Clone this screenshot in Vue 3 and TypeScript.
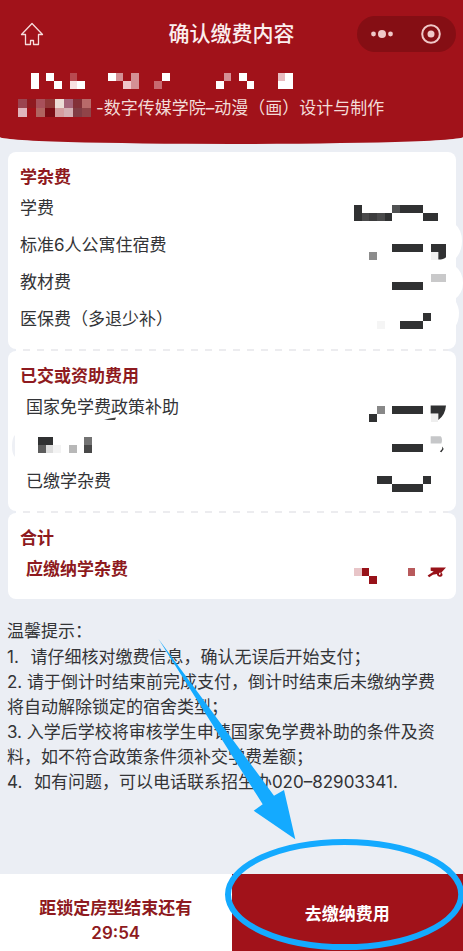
<script setup lang="ts">
import { h } from 'vue'
import type { FunctionalComponent } from 'vue'

// A masked block: column, row, width in cells, colour
type Cell = [number, number, number, string]

interface MosaicProps {
  cells: Cell[]
  cols: number
  shift?: number
}

interface FeeRow {
  label: string
  labelMask?: Cell[]
  amount: Cell[]
  // Vertical distance of the mask grid from the row's own grid
  shift?: number
  marks?: { d: string; fill: string }[]
}

interface FeeSection {
  title: string
  indented: boolean
  strong: boolean
  rows: FeeRow[]
}

const Mosaic: FunctionalComponent<MosaicProps> = (props) =>
  h(
    'svg',
    {
      viewBox: `0 0 ${props.cols * 10} 20`,
      preserveAspectRatio: 'none',
      'shape-rendering': 'crispEdges',
      'aria-hidden': 'true',
    },
    props.cells.map(([x, y, w, fill]) =>
      h('rect', { x: x * 10, y: y * 10 + (props.shift ?? 0), width: w * 10, height: 10, fill }),
    ),
  )
Mosaic.props = ['cells', 'cols', 'shift']

const ink = '#303132'
const red = '#981219'

const nameMask: Cell[] = [
  [0, 0, 1, '#fff'], [0, 1, 1, '#fff'], [2, 0, 1, '#fff'], [3, 1, 1, '#fff'],
  [5, 0, 1, '#b84a50'], [5, 1, 1, '#f8e0e0'], [6, 1, 1, '#fff'],
  [10, 0, 1, '#fff'], [11, 0, 1, '#d48f94'], [12, 1, 1, '#f0c6ca'],
  [13, 0, 1, '#d48f94'], [13, 1, 1, '#d48f94'], [16, 1, 1, '#c86a70'], [17, 0, 1, '#fff'],
  [24, 1, 1, '#fff'], [25, 0, 1, '#d48f94'], [27, 0, 1, '#fff'], [28, 1, 1, '#fff'],
  [32, 0, 1, '#e8bcc0'], [33, 0, 1, '#fff'], [32, 1, 2, '#fff'],
]

const classMask: Cell[] = [
  [0, 0, 1, '#9b4450'], [1, 0, 1, '#8f1a20'], [2, 0, 1, '#a8505a'], [3, 0, 1, '#903838'],
  [4, 0, 1, '#ecdcd6'], [5, 0, 1, '#a5647a'], [6, 0, 1, '#833038'], [7, 0, 1, '#b86a6a'],
  [0, 1, 1, '#e0b4bc'], [2, 1, 1, '#b06460'], [3, 1, 1, '#7a0c14'],
  [4, 1, 1, '#d49ea0'], [5, 1, 1, '#d4b0b4'], [6, 1, 1, '#803c44'], [7, 1, 1, '#904448'],
]

const sections: FeeSection[] = [
  {
    title: '学杂费',
    indented: false,
    strong: false,
    rows: [
      {
        label: '学费',
        amount: [
          [0, 0, 1, ink], [0, 1, 1, ink], [1, 1, 1, '#4a4a4b'], [2, 1, 1, '#3c3c3d'],
          [3, 1, 1, '#4a4a4b'], [4, 1, 1, ink], [5, 0, 1, '#505152'], [6, 0, 3, ink], [9, 1, 2, ink],
        ],
      },
      {
        label: '标准6人公寓住宿费',
        shift: 2,
        amount: [[5, 0, 4, ink], [2, 1, 1, '#8c8c8c'], [10, 0, 2, ink], [10, 1, 1, '#f0f0f0']],
        marks: [{ d: 'M110 10H120V17Q117 20 110 20Z', fill: ink }],
      },
      { label: '教材费', shift: -6, amount: [[10, 0, 2, '#c9c9ca'], [5, 1, 4, ink]] },
      { label: '医保费（多退少补）', shift: -4, amount: [[9, 0, 1, ink], [6, 1, 3, ink], [3, 1, 1, '#f5f5f5']] },
    ],
  },
  {
    title: '已交或资助费用',
    indented: true,
    strong: false,
    rows: [
      {
        label: '国家免学费政策补助',
        shift: 2,
        amount: [[3, 0, 1, '#888'], [2, 1, 1, ink], [5, 0, 4, ink], [10, 1, 1, '#eee']],
        marks: [{ d: 'M100 0H120Q119 12 110 18V10H100Z', fill: ink }],
      },
      {
        label: '',
        labelMask: [
          [0, 0, 2, ink], [0, 1, 1, '#5c5c5c'], [1, 1, 1, '#ddd'], [2, 1, 1, '#f3f3f3'],
          [4, 1, 1, '#b8b8b8'], [6, 0, 1, '#737373'], [6, 1, 1, '#484848'],
        ],
        shift: -6,
        amount: [[5, 1, 4, ink]],
        marks: [
          { d: 'M100 0H113Q116 3 114 9H100Z', fill: '#c6c7c9' },
          { d: 'M115 13L117 16L114 20L112 19L115 16Z', fill: ink },
        ],
      },
      { label: '已缴学杂费', shift: -3, amount: [[3, 0, 2, ink], [9, 0, 1, ink], [5, 1, 4, ink]] },
    ],
  },
  {
    title: '合计',
    indented: true,
    strong: true,
    rows: [
      {
        label: '应缴纳学杂费',
        shift: 2,
        amount: [[0, 0, 1, '#e8c5c8'], [1, 0, 1, red], [2, 1, 1, red], [7, 0, 1, '#b85a5c']],
        marks: [
          { d: 'M100 0H120L114 6Q117 9 114 11Q109 13 108 8Q103 8 98 12L96 10Q101 7 104 5L100 4Z', fill: red },
          { d: 'M111 7Q113 5 113 8Q112 10 111 9Z', fill: '#fff' },
        ],
      },
    ],
  },
]

const notes: string[] = [
  '1.\u2002\u2009请仔细核对缴费信息，确认无误后开始支付；',
  '2. 请于倒计时结束前完成支付，倒计时结束后未缴纳学费将自动解除锁定的宿舍类型；',
  '3. 入学后学校将审核学生申请国家免学费补助的条件及资料，如不符合政策条件须补交学费差额；',
  '4.\u2002\u2009如有问题，可以电话联系招生办020–82903341.',
]
</script>

<template>
  <div class="page">
    <header class="hero">
      <nav class="nav">
        <a class="home" href="#" aria-label="首页">
          <svg viewBox="0 0 24 24" aria-hidden="true">
            <path d="M12 1.5L1.5 12.5H5.500V22.5H10.500V18.5H13.500V22.5H18.5V12.5H22.5Z" />
          </svg>
        </a>
        <h1 class="title">确认缴费内容</h1>
        <div class="capsule">
          <button type="button" aria-label="更多">
            <svg viewBox="0 0 22 10" width="22" height="10" aria-hidden="true">
              <circle cx="2.5" cy="5" r="2.4" /><circle cx="11" cy="5" r="4" /><circle cx="19.5" cy="5" r="2.4" />
            </svg>
          </button>
          <button type="button" aria-label="关闭">
            <svg viewBox="0 0 20 20" width="20" height="20" aria-hidden="true">
              <circle class="ring" cx="10" cy="10" r="8.8" /><circle cx="10" cy="10" r="3.5" />
            </svg>
          </button>
        </div>
      </nav>
      <Mosaic class="name-mask" :cells="nameMask" :cols="34" />
      <p class="major">
        <Mosaic class="class-mask" :cells="classMask" :cols="8" />
        <span>-数字传媒学院–动漫（画）设计与制作</span>
      </p>
    </header>

    <main class="content">
      <div class="bill">
        <section
          v-for="section in sections"
          :key="section.title"
          class="block"
          :class="{ indented: section.indented, strong: section.strong }"
        >
          <h2>{{ section.title }}</h2>
          <dl>
            <div v-for="(row, i) in section.rows" :key="i" class="row">
              <dt>
                <Mosaic v-if="row.labelMask" class="label-mask" :cells="row.labelMask" :cols="7" />
                <template v-else>{{ row.label }}</template>
              </dt>
              <dd>
                <Mosaic class="amount-mask" :cells="row.amount" :cols="12" :shift="row.shift" />
                <svg v-if="row.marks" class="amount-mask marks" viewBox="0 0 120 20" preserveAspectRatio="none" aria-hidden="true">
                  <g :transform="`translate(0 ${row.shift ?? 0})`">
                    <path v-for="mark in row.marks" :key="mark.d" :d="mark.d" :fill="mark.fill" />
                  </g>
                </svg>
              </dd>
            </div>
          </dl>
        </section>
      </div>

      <section class="notes">
        <h2>温馨提示：</h2>
        <p v-for="note in notes" :key="note">{{ note }}</p>
      </section>
    </main>

    <footer class="actions">
      <div class="countdown">
        <span>距锁定房型结束还有</span>
        <time>29:54</time>
      </div>
      <button type="button" class="pay">去缴纳费用</button>
    </footer>

    <svg class="annotation" viewBox="0 0 463 951" aria-hidden="true">
      <path class="bump" d="M455 224Q462 230 462 241Q462 252 455 259ZM455 266Q463 272 463 283Q463 293 455 299ZM455 300Q459 307 459 313Q459 321 455 327Z" />
      <path class="notch" d="M15 435Q12 438 12 446Q12 454 15 457Z" />
      <path class="smudge" d="M104 420Q109 418 116 417.5L115 420Z" />
      <path class="arrow" d="M158.5 639L274 795.7L284 790L295.3 839.3L253.7 810.7L262.7 804.3Z" />
      <ellipse class="lasso" cx="344.6" cy="894.5" rx="116.6" ry="52.6" />
    </svg>
  </div>
</template>

<style>
body {
  margin: 0;
  background: #ebeef4;
}
</style>

<style scoped>
.page {
  position: relative;
  display: flex;
  flex-direction: column;
  min-height: 100vh;
  overflow: hidden;
  color: #333437;
  font-family: Inter, "Noto Sans CJK SC", sans-serif;
  font-size: 17px;
  line-height: 25px;
}

h1,
h2,
p,
dl,
dd {
  margin: 0;
}

button {
  margin: 0;
  padding: 0;
  border: 0;
  font: inherit;
  cursor: pointer;
}

.hero {
  padding: 15px 7px 24px 18px;
  border-radius: 0 0 50% 50% / 0 0 7px 7px;
  background: #a1121a;
  color: #f3dcd8;
}

.nav {
  display: grid;
  grid-template-columns: 1fr auto 1fr;
  align-items: center;
  margin-left: -11px;
}

.home {
  display: flex;
  width: 24px;
  height: 24px;
  margin-left: 13px;
}

.home svg {
  width: 24px;
  height: 24px;
  fill: none;
  stroke: #f6dcdc;
  stroke-width: 1.3;
  stroke-linejoin: round;
}

.title {
  padding-top: 1px;
  color: #fbeeee;
  font-size: 21px;
  font-weight: 500;
  line-height: 36px;
}

.capsule {
  display: grid;
  grid-template-columns: 1fr 1fr;
  justify-self: end;
  width: 99px;
  height: 36px;
  border-radius: 18px;
  background: #850e14;
}

.capsule button {
  display: flex;
  align-items: center;
  justify-content: center;
  background: none;
}

.capsule svg {
  fill: #f0c8c8;
}

.capsule .ring {
  fill: none;
  stroke: #f0c8c8;
  stroke-width: 2;
}

.name-mask {
  display: block;
  width: 262px;
  height: 16px;
  margin: 21px 0 7px 13px;
}

.major {
  display: flex;
  align-items: center;
  gap: 5px;
  height: 24px;
}

.class-mask {
  width: 73px;
  height: 18px;
}

.content {
  padding: 8px 7px 24px;
}

.bill {
  display: grid;
  gap: 2px;
  margin-left: 1px;
}

.block {
  position: relative;
  padding: 12px 10px 11px 12px;
  border-radius: 8px;
  background: #fff;
}

.block + .block::before {
  content: "";
  position: absolute;
  top: -2px;
  left: 8px;
  right: 8px;
  height: 2px;
  background: repeating-linear-gradient(90deg, #fff 0 7px, #ececef 7px 14px);
}

.block h2 {
  color: #8e1a20;
  font-size: 17px;
  font-weight: 700;
  line-height: 26px;
}

.row {
  display: flex;
  align-items: center;
  justify-content: space-between;
  height: 37px;
}

.indented .row {
  padding-left: 6px;
}

.strong .row {
  color: #8e1a20;
  font-weight: 700;
}

dd {
  position: relative;
  align-self: flex-end;
  height: 22px;
}

.amount-mask {
  display: block;
  width: 92px;
  height: 16px;
  overflow: visible;
}

.marks {
  position: absolute;
  top: 0;
  left: 0;
}

.label-mask {
  display: block;
  width: 54px;
  height: 16px;
  margin-left: 12px;
}

.notes {
  padding: 20px 9px 0 0;
}

.notes h2 {
  margin-bottom: 1px;
  font-size: 17px;
  font-weight: 400;
}

.actions {
  display: grid;
  grid-template-columns: 1fr 1fr;
  margin-top: auto;
  min-height: 77px;
}

.countdown {
  display: flex;
  flex-direction: column;
  align-items: center;
  justify-content: center;
  padding-top: 16px;
  background: #fff;
  color: #8e1a20;
  font-weight: 700;
}

.countdown time {
  font-weight: 600;
}

.pay {
  padding-top: 4px;
  background: #a1121a;
  color: #fff;
  font-weight: 700;
}

.annotation {
  position: absolute;
  top: 0;
  left: 0;
  width: 100%;
  pointer-events: none;
}

.bump {
  fill: #fff;
}

.notch {
  fill: #eef0f5;
}

.smudge {
  fill: #444;
}

.arrow {
  fill: #14aaff;
}

.lasso {
  fill: none;
  stroke: #14aaff;
  stroke-width: 6;
}
</style>
